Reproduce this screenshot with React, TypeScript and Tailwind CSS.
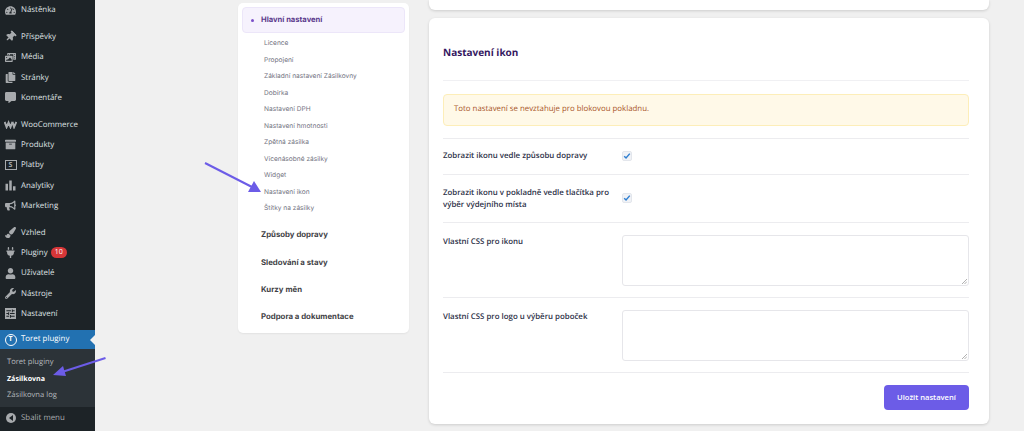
import React from "react";
import {
  FaTachometerAlt,
  FaThumbtack,
  FaPhotoVideo,
  FaCopy,
  FaCommentAlt,
  FaArchive,
  FaBullhorn,
  FaPaintBrush,
  FaPlug,
  FaUser,
  FaWrench,
} from "react-icons/fa";
import { MdBarChart, MdTune } from "react-icons/md";

const WooIcon = () => (
  <svg viewBox="0 0 20 12" className="w-[13px] h-[9px]" fill="none" stroke="currentColor" strokeWidth="3">
    <path d="M1 2l3 8 3-7 3 7 3-8M13 2l2.500 8 3.500-8" />
  </svg>
);

const PlatbyIcon = () => (
  <span className="w-[12px] h-[10px] border border-current flex items-center justify-center text-[7px] leading-none font-bold">
    S
  </span>
);

const menuGroups = [
  [{ icon: <FaTachometerAlt />, label: "Nástěnka" }],
  [
    { icon: <FaThumbtack className="rotate-45" />, label: "Příspěvky" },
    { icon: <FaPhotoVideo />, label: "Média" },
    { icon: <FaCopy />, label: "Stránky" },
    { icon: <FaCommentAlt />, label: "Komentáře" },
  ],
  [
    { icon: <WooIcon />, label: "WooCommerce" },
    { icon: <FaArchive />, label: "Produkty" },
    { icon: <PlatbyIcon />, label: "Platby" },
    { icon: <MdBarChart className="text-[15px]" />, label: "Analytiky" },
    { icon: <FaBullhorn />, label: "Marketing" },
  ],
  [
    { icon: <FaPaintBrush />, label: "Vzhled" },
    { icon: <FaPlug />, label: "Pluginy", badge: "10" },
    { icon: <FaUser />, label: "Uživatelé" },
    { icon: <FaWrench />, label: "Nástroje" },
    { icon: <MdTune className="text-[11px] bg-[#a7aaad] text-[#1d2327]" />, label: "Nastavení" },
  ],
];

const subItems = [
  "Licence",
  "Propojení",
  "Základní nastavení Zásilkovny",
  "Dobírka",
  "Nastavení DPH",
  "Nastavení hmotnosti",
  "Zpětná zásilka",
  "Vícenásobné zásilky",
  "Widget",
  "Nastavení ikon",
  "Štítky na zásilky",
];

const sections = ["Způsoby dopravy", "Sledování a stavy", "Kurzy měn", "Podpora a dokumentace"];

const Check = () => (
  <span className="w-[10px] h-[10px] -mt-[2px] rounded-[2px] bg-[#f0f2f6] border border-[#e3e6ec] flex items-center justify-center">
    <svg viewBox="0 0 10 10" className="w-[8px] h-[8px]" fill="none" stroke="#2f7fd0" strokeWidth="1.800">
      <path d="M1.500 5.200l2.300 2.300 4.700-5.500" />
    </svg>
  </span>
);

const TextBox = () => (
  <div className="relative w-[347px] shrink-0 h-[51px] rounded-[3px] border border-[#e6e6ea] bg-white">
    <svg viewBox="0 0 6 6" className="absolute right-[1px] bottom-[1px] w-[5px] h-[5px]" stroke="#8a8a8a" strokeWidth="0.800">
      <path d="M0 6L6 0M3 6l3-3" />
    </svg>
  </div>
);

export default function App() {
  return (
    <div className="relative flex w-[1024px] h-[431px] overflow-hidden bg-[#f0f0f0] font-['Open_Sans','Noto_Sans',sans-serif] [text-rendering:geometricPrecision]">
      {/* admin menu */}
      <aside className="flex flex-col w-[95px] h-full shrink-0 bg-[#1d2327] text-[#dfe1e3] text-[7.900px]">
        {menuGroups.map((group, i) => (
          <div key={i} className="flex flex-col mb-[6.500px]">
            {group.map((item) => (
              <div key={item.label} className="flex items-center h-[20.300px]">
                <span className="w-[21px] flex justify-center text-[#a7aaad] text-[11px]">{item.icon}</span>
                <span className="pt-[2px]">{item.label}</span>
                {item.badge && (
                  <span className="ml-[3px] px-[4px] h-[11px] rounded-full bg-[#d63638] text-white text-[7px] leading-[11px]">
                    {item.badge}
                  </span>
                )}
              </div>
            ))}
          </div>
        ))}
        <div className="relative flex items-center h-[19.500px] bg-[#2271b1] text-white -mt-[0.500px]">
          <span className="w-[21px] flex justify-center">
            <span className="w-[12px] h-[12px] rounded-full border border-white flex items-center justify-center text-[7px] leading-none font-bold">
              T
            </span>
          </span>
          <span>Toret pluginy</span>
          <span className="absolute right-0 top-[5px] border-y-[5px] border-y-transparent border-r-[5px] border-r-[#f0f0f0]" />
        </div>
        <div className="flex flex-col justify-center h-[58px] pl-[7px] pt-[2px] bg-[#2c3338] text-[#b4b9be] gap-[3px] text-[7.600px]">
          <span className="leading-[13.500px]">Toret pluginy</span>
          <span className="leading-[13.500px] font-bold text-white text-[7.100px]">Zásilkovna</span>
          <span className="leading-[13.500px]">Zásilkovna log</span>
        </div>
        <div className="flex items-center h-[22px] text-[#a7aaad]">
          <span className="w-[21px] flex justify-center">
            <span className="w-[10px] h-[10px] rounded-full bg-[#a7aaad] flex items-center justify-center">
              <span className="border-y-[3px] border-y-transparent border-r-[4px] border-r-[#1d2327]" />
            </span>
          </span>
          <span>Sbalit menu</span>
        </div>
      </aside>

      <main className="flex items-start gap-[20px] pl-[143px] font-['Inter','Open_Sans',sans-serif]">
        {/* settings nav */}
        <nav className="w-[171px] h-[330px] mt-[3px] p-[4px] rounded-[5px] bg-white shadow-[0_1px_2px_rgba(0,0,0,0.06)]">
          <div className="flex items-center h-[26px] pl-[8px] rounded-[4px] bg-[#f6f2fd] border border-[#ece6f9] text-[#5b3a8c] text-[7.600px] font-bold">
            <span className="w-[3px] h-[3px] rounded-full bg-[#7b4fc9] mr-[7px]" />
            Hlavní nastavení
          </div>
          <ul className="mt-[3px] pl-[22px]">
            {subItems.map((s) => (
              <li key={s} className="flex items-center h-[16.500px] text-[6.600px] text-[#73737f]">
                {s}
              </li>
            ))}
          </ul>
          <ul className="mt-[4px] pl-[19px]">
            {sections.map((s) => (
              <li key={s} className="flex items-center h-[27.300px] text-[7.800px] font-bold text-[#3f3f46]">
                {s}
              </li>
            ))}
          </ul>
        </nav>

        <div className="flex flex-col gap-[8px] w-[560px]">
          <div className="h-[10px] rounded-b-[6px] bg-white shadow-[0_1px_3px_rgba(0,0,0,0.15)]" />
          {/* icon settings card */}
          <section className="h-[406px] pl-[14px] pr-[20px] rounded-[6px] bg-white shadow-[0_1px_3px_rgba(0,0,0,0.15)] font-['Open_Sans',sans-serif]">
            <div className="flex items-center h-[63px] pt-[6px] border-b border-[#f0f0f3]">
              <h2 className="text-[10px] font-bold text-[#35185f]">Nastavení ikon</h2>
            </div>
            <div className="pt-[13px] pb-[12px] border-b border-[#ececef]">
              <div className="flex items-center h-[32px] px-[10px] rounded-[4px] bg-[#fff9e8] border border-[#fdeeb9] text-[7.850px] text-[#a9562a]">
                Toto nastavení se nevztahuje pro blokovou pokladnu.
              </div>
            </div>
            <div className="flex items-center h-[36px] border-b border-[#ececef]">
              <span className="w-[179px] text-[7.870px] font-semibold text-[#2c3047]">
                Zobrazit ikonu vedle způsobu dopravy
              </span>
              <Check />
            </div>
            <div className="flex items-center h-[48px] border-b border-[#ececef]">
              <span className="w-[179px] text-[7.870px] leading-[12px] font-semibold text-[#2c3047]">
                Zobrazit ikonu v pokladně vedle tlačítka pro výběr výdejního místa
              </span>
              <Check />
            </div>
            <div className="flex items-start h-[75px] pt-[12px] border-b border-[#ececef]">
              <span className="w-[179px] pt-[2px] text-[7.870px] font-semibold text-[#2c3047]">Vlastní CSS pro ikonu</span>
              <TextBox />
            </div>
            <div className="flex items-start h-[75px] pt-[12px] border-b border-[#ececef]">
              <span className="w-[179px] pt-[2px] text-[7.870px] font-semibold text-[#2c3047]">
                Vlastní CSS pro logo u výběru poboček
              </span>
              <TextBox />
            </div>
            <div className="flex justify-end pt-[12px]">
              <button className="w-[85px] h-[25px] rounded-[4px] bg-[#6c5ce7] text-white text-[7.600px] font-semibold">
                Uložit nastavení
              </button>
            </div>
          </section>
        </div>
      </main>

      {/* annotation arrows drawn over the screenshot */}
      <svg viewBox="0 0 1024 431" className="absolute inset-0 w-[1024px] h-[431px] pointer-events-none">
        <path d="M205 163L252 187" stroke="#6c5ce7" strokeWidth="2" />
        <path d="M261 192L248 192L254 181Z" fill="#6c5ce7" />
        <path d="M105.500 358L62 372" stroke="#6c5ce7" strokeWidth="2" />
        <path d="M53 375L63 366L66 376Z" fill="#6c5ce7" />
      </svg>
    </div>
  );
}
